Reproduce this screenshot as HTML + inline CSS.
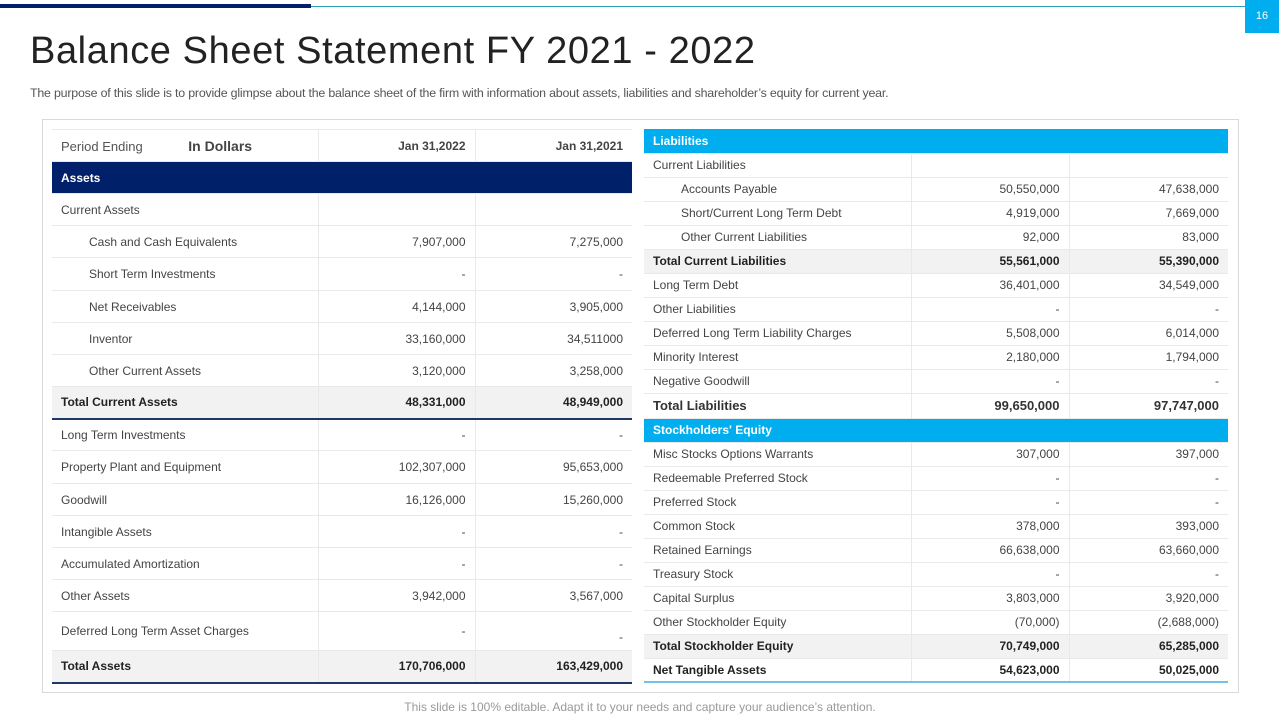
<!DOCTYPE html>
<html><head><meta charset="utf-8"><style>
*{margin:0;padding:0;box-sizing:border-box}
body{width:1280px;height:720px;background:#fff;position:relative;overflow:hidden;font-family:"Liberation Sans",sans-serif;color:#404040}
.a{position:absolute}
table{position:absolute;border-collapse:collapse;table-layout:fixed;font-size:12px}
td{border-bottom:1px solid #e9e9e9;border-right:1px solid #e9e9e9;padding:0 9px;white-space:nowrap;color:#444}
td:last-child{border-right:none}
td.n{text-align:right}
.i{padding-left:37px}
.hd td{background:#002169;color:#fff;font-weight:bold;font-size:12px}
.lb td{background:#00aeef;color:#fff;font-weight:bold;font-size:12px}
.t td{background:#f2f2f2;font-weight:bold;color:#222}
</style></head><body>
<div class="a" style="left:0;top:4px;width:311px;height:4px;background:#002169"></div>
<div class="a" style="left:311px;top:6px;width:934px;height:1px;background:#2a9db5"></div>
<div class="a" style="left:1245px;top:0;width:34px;height:33px;background:#00aeef;color:#fff;font-size:11px;text-align:center;line-height:33px">16</div>
<div class="a" style="left:30px;top:30px;font-size:38px;color:#222;letter-spacing:0.6px">Balance Sheet Statement FY 2021 - 2022</div>
<div class="a" style="left:30px;top:86px;font-size:12.4px;color:#555;letter-spacing:-0.2px">The purpose of this slide is to provide glimpse about the balance sheet of the firm with information about assets, liabilities and shareholder’s equity for current year.</div>
<div class="a" style="left:42px;top:119px;width:1197px;height:574px;border:1px solid #d9d9d9"></div>

<table style="left:52px;top:129px;width:580px">
<col style="width:266px"><col style="width:157px"><col style="width:157px">
<tr style="height:32px"><td style="font-size:13px;color:#555;border-top:1px solid #e9e9e9">Period Ending <b style="font-size:14px;margin-left:42px;color:#444">In Dollars</b></td><td class="n" style="font-weight:bold;border-top:1px solid #e9e9e9">Jan 31,2022</td><td class="n" style="font-weight:bold;border-top:1px solid #e9e9e9">Jan 31,2021</td></tr>
<tr class="hd" style="height:32px"><td colspan="3">Assets</td></tr>
<tr style="height:32px"><td>Current Assets</td><td></td><td></td></tr>
<tr style="height:32px"><td class="i">Cash and Cash Equivalents</td><td class="n">7,907,000</td><td class="n">7,275,000</td></tr>
<tr style="height:33px"><td class="i">Short Term Investments</td><td class="n">-</td><td class="n">-</td></tr>
<tr style="height:32px"><td class="i">Net Receivables</td><td class="n">4,144,000</td><td class="n">3,905,000</td></tr>
<tr style="height:32px"><td class="i">Inventor</td><td class="n">33,160,000</td><td class="n">34,511000</td></tr>
<tr style="height:32px"><td class="i">Other Current Assets</td><td class="n">3,120,000</td><td class="n">3,258,000</td></tr>
<tr class="t" style="height:32px;border-bottom:2px solid #1f3864"><td>Total Current Assets</td><td class="n">48,331,000</td><td class="n">48,949,000</td></tr>
<tr style="height:32px"><td>Long Term Investments</td><td class="n">-</td><td class="n">-</td></tr>
<tr style="height:33px"><td>Property Plant and Equipment</td><td class="n">102,307,000</td><td class="n">95,653,000</td></tr>
<tr style="height:32px"><td>Goodwill</td><td class="n">16,126,000</td><td class="n">15,260,000</td></tr>
<tr style="height:32px"><td>Intangible Assets</td><td class="n">-</td><td class="n">-</td></tr>
<tr style="height:32px"><td>Accumulated Amortization</td><td class="n">-</td><td class="n">-</td></tr>
<tr style="height:32px"><td>Other Assets</td><td class="n">3,942,000</td><td class="n">3,567,000</td></tr>
<tr style="height:39px"><td>Deferred Long Term Asset Charges</td><td class="n">-</td><td class="n" style="vertical-align:bottom;padding-bottom:6px">-</td></tr>
<tr class="t" style="height:32px;border-bottom:2px solid #1f3864"><td>Total Assets</td><td class="n">170,706,000</td><td class="n">163,429,000</td></tr>
</table>

<table style="left:644px;top:129px;width:584px">
<col style="width:267px"><col style="width:158px"><col style="width:159px">
<tr class="lb" style="height:24px"><td colspan="3">Liabilities</td></tr>
<tr style="height:24px"><td>Current Liabilities</td><td></td><td></td></tr>
<tr style="height:24px"><td class="i">Accounts Payable</td><td class="n">50,550,000</td><td class="n">47,638,000</td></tr>
<tr style="height:24px"><td class="i">Short/Current Long Term Debt</td><td class="n">4,919,000</td><td class="n">7,669,000</td></tr>
<tr style="height:24px"><td class="i">Other Current Liabilities</td><td class="n">92,000</td><td class="n">83,000</td></tr>
<tr class="t" style="height:24px"><td>Total Current Liabilities</td><td class="n">55,561,000</td><td class="n">55,390,000</td></tr>
<tr style="height:24px"><td>Long Term Debt</td><td class="n">36,401,000</td><td class="n">34,549,000</td></tr>
<tr style="height:24px"><td>Other Liabilities</td><td class="n">-</td><td class="n">-</td></tr>
<tr style="height:24px"><td>Deferred Long Term Liability Charges</td><td class="n">5,508,000</td><td class="n">6,014,000</td></tr>
<tr style="height:24px"><td>Minority Interest</td><td class="n">2,180,000</td><td class="n">1,794,000</td></tr>
<tr style="height:24px"><td>Negative Goodwill</td><td class="n">-</td><td class="n">-</td></tr>
<tr style="height:25px;font-size:13px;font-weight:bold"><td style="color:#333">Total Liabilities</td><td class="n" style="color:#333">99,650,000</td><td class="n" style="color:#333">97,747,000</td></tr>
<tr class="lb" style="height:24px"><td colspan="3">Stockholders' Equity</td></tr>
<tr style="height:24px"><td>Misc Stocks Options Warrants</td><td class="n">307,000</td><td class="n">397,000</td></tr>
<tr style="height:24px"><td>Redeemable Preferred Stock</td><td class="n">-</td><td class="n">-</td></tr>
<tr style="height:24px"><td>Preferred Stock</td><td class="n">-</td><td class="n">-</td></tr>
<tr style="height:24px"><td>Common Stock</td><td class="n">378,000</td><td class="n">393,000</td></tr>
<tr style="height:24px"><td>Retained Earnings</td><td class="n">66,638,000</td><td class="n">63,660,000</td></tr>
<tr style="height:24px"><td>Treasury Stock</td><td class="n">-</td><td class="n">-</td></tr>
<tr style="height:24px"><td>Capital Surplus</td><td class="n">3,803,000</td><td class="n">3,920,000</td></tr>
<tr style="height:24px"><td>Other Stockholder Equity</td><td class="n">(70,000)</td><td class="n">(2,688,000)</td></tr>
<tr class="t" style="height:24px"><td>Total Stockholder Equity</td><td class="n">70,749,000</td><td class="n">65,285,000</td></tr>
<tr style="height:24px;border-bottom:2px solid #6fc3e6;font-weight:bold"><td style="color:#222">Net Tangible Assets</td><td class="n" style="color:#222">54,623,000</td><td class="n" style="color:#222">50,025,000</td></tr>
</table>

<div class="a" style="left:0;width:1280px;top:700px;text-align:center;font-size:12px;color:#999">This slide is 100% editable. Adapt it to your needs and capture your audience’s attention.</div>
</body></html>
